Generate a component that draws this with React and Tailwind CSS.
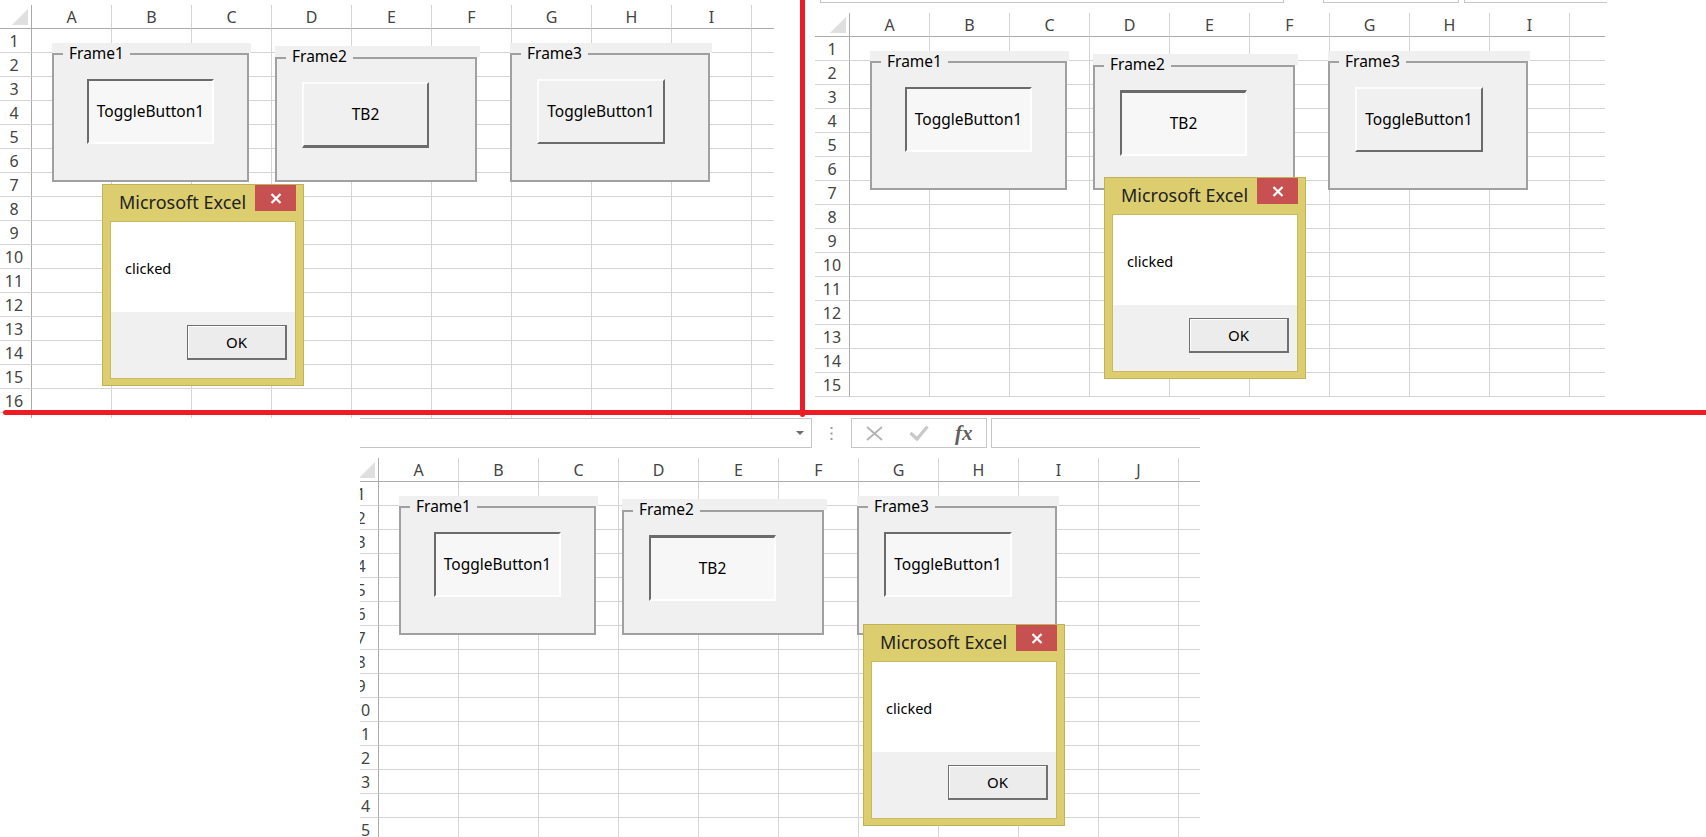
import React from "react";

const COLS = ["A", "B", "C", "D", "E", "F", "G", "H", "I", "J"];

function Corner() {
  return (
    <div className="relative h-[24px] border-r border-b border-[#ababab]">
      <svg className="absolute right-[3px] bottom-[3px]" width="16" height="16" viewBox="0 0 16 16">
        <polygon points="16,0 16,16 0,16" fill="#dfdfdf" />
      </svg>
    </div>
  );
}

function Sheet({ gridClass, ncols, nrows }) {
  const cells = [<Corner key="corner" />];
  for (let c = 0; c < ncols; c++) {
    cells.push(
      <div
        key={"h" + c}
        className="flex h-[24px] items-center justify-center border-r border-b border-r-[#d4d4d4] border-b-[#ababab] text-[16px] leading-none text-[#444]"
      >
        {COLS[c]}
      </div>
    );
  }
  cells.push(<div key="hp" className="h-[24px] border-b border-[#ababab]" />);
  for (let r = 1; r <= nrows; r++) {
    cells.push(
      <div
        key={"r" + r}
        className="flex h-[24px] items-center justify-center border-r border-b border-r-[#ababab] border-b-[#d4d4d4] text-[16px] leading-none text-[#444]"
      >
        {r}
      </div>
    );
    for (let c = 0; c < ncols; c++) {
      cells.push(<div key={r + "-" + c} className="h-[24px] border-r border-b border-[#d4d4d4]" />);
    }
    cells.push(<div key={r + "-p"} className="h-[24px] border-b border-[#d4d4d4]" />);
  }
  return <div className={`grid ${gridClass}`}>{cells}</div>;
}

const FRAME_TYPES = {
  a: { strip: "h-[10px] w-[199px]", box: "h-[129px] w-[197px]", btn: "left-[35px] top-[36px] h-[65px] w-[127px]" },
  b: { strip: "h-[11px] w-[205px]", box: "h-[125px] w-[202px]", btn: "left-[27px] top-[36px] h-[66px] w-[127px]" },
  c: { strip: "h-[10px] w-[202px]", box: "h-[129px] w-[200px]", btn: "left-[27px] top-[36px] h-[65px] w-[128px]" },
};

const BTN_KINDS = {
  sunken:
    "border-2 border-t-[#6b6b6b] border-l-[#6b6b6b] border-r-white border-b-white bg-[#f7f7f7]",
  sunkenThick:
    "border-2 border-t-[3px] border-t-[#6b6b6b] border-l-[#6b6b6b] border-r-white border-b-white bg-[#f7f7f7]",
  raised:
    "border-2 border-t-[#fcfcfc] border-l-[#fcfcfc] border-r-[#6b6b6b] border-b-[#6b6b6b] bg-[#f0f0f0]",
  raisedThick:
    "border-2 border-b-[3px] border-t-[#fcfcfc] border-l-[#fcfcfc] border-r-[#6b6b6b] border-b-[#6b6b6b] bg-[#f0f0f0]",
};

function Frame({ pos, type, caption, label, kind }) {
  const t = FRAME_TYPES[type];
  return (
    <div className={`absolute ${pos} flex flex-col`}>
      <div className={`${t.strip} bg-[#f0f0f0]`} />
      <div className={`${t.box} border-2 border-[#a0a0a0] bg-[#f0f0f0]`} />
      <span className="absolute top-0 left-[11px] bg-[#f0f0f0] px-[6px] text-[15.5px] leading-[20px] text-black">
        {caption}
      </span>
      <div
        className={`absolute ${t.btn} ${BTN_KINDS[kind]} flex items-center justify-center text-[15.5px] leading-none text-black`}
      >
        {label}
      </div>
    </div>
  );
}

function Dialog({ pos }) {
  return (
    <div className={`absolute ${pos} flex h-[202px] w-[202px] flex-col border border-[#c2b257] bg-[#dccd6e]`}>
      <div className="flex h-[36px] items-start justify-between">
        <span className="mt-[5px] ml-[16px] text-[18px] leading-[24px] text-[#222]">Microsoft Excel</span>
        <div className="mr-[7px] flex h-[26px] w-[41px] items-center justify-center bg-[#c75050]">
          <svg width="12" height="11" viewBox="0 0 12 11">
            <path d="M1.5 1 L10.5 10 M10.5 1 L1.5 10" stroke="#ffffff" strokeWidth="2.2" fill="none" />
          </svg>
        </div>
      </div>
      <div className="mx-[7px] flex h-[158px] flex-col border border-[#c8b95c]">
        <div className="h-[90px] bg-white pt-[36px] pl-[14px] text-[14.5px] leading-[20px] text-black">clicked</div>
        <div className="flex flex-1 items-start justify-end bg-[#f0f0f0] pt-[13px] pr-[8px]">
          <div className="flex h-[35px] w-[100px] items-center justify-center border border-r-2 border-b-2 border-[#707070] bg-[#ececec] text-[15px] leading-none text-black shadow-[inset_1px_1px_0_#ffffff]">
            OK
          </div>
        </div>
      </div>
    </div>
  );
}

export default function App() {
  return (
    <div className="relative h-[837px] w-[1706px] overflow-hidden bg-white font-['Noto_Sans',sans-serif] text-black">
      <div className="flex h-[418px]">
        {/* Panel 1 */}
        <div className="relative h-full w-[805px] shrink-0 overflow-hidden pt-[5px]">
          <div className="-ml-[3px]">
            <Sheet gridClass="grid-cols-[35px_repeat(9,80px)_22px]" ncols={9} nrows={17} />
          </div>
          <Frame pos="left-[52px] top-[43px]" type="a" caption="Frame1" label="ToggleButton1" kind="sunken" />
          <Frame pos="left-[275px] top-[46px]" type="b" caption="Frame2" label="TB2" kind="raisedThick" />
          <Frame pos="left-[510px] top-[43px]" type="c" caption="Frame3" label="ToggleButton1" kind="raised" />
          <Dialog pos="left-[102px] top-[184px]" />
        </div>

        {/* Panel 2 */}
        <div className="relative h-full flex-1 overflow-hidden">
          <div className="flex h-[3px]">
            <div className="ml-[15px] w-[464px] border-x border-b border-[#c6c6c6]" />
            <div className="ml-[39px] w-[136px] border-x border-b border-[#c6c6c6]" />
            <div className="ml-[5px] w-[143px] border-l border-b border-[#c6c6c6]" />
          </div>
          <div className="mt-[10px] ml-[10px]">
            <Sheet gridClass="grid-cols-[35px_repeat(9,80px)_35px]" ncols={9} nrows={15} />
          </div>
          <Frame pos="left-[65px] top-[51px]" type="a" caption="Frame1" label="ToggleButton1" kind="sunken" />
          <Frame pos="left-[288px] top-[54px]" type="b" caption="Frame2" label="TB2" kind="sunkenThick" />
          <Frame pos="left-[523px] top-[51px]" type="c" caption="Frame3" label="ToggleButton1" kind="raised" />
          <Dialog pos="left-[299px] top-[177px]" />
        </div>
      </div>

      {/* Panel 3 */}
      <div className="relative ml-[360px] h-[419px] w-[840px] overflow-hidden">
        <div className="flex h-[30px]">
          <div className="flex w-[452px] items-center justify-end border-y border-r border-[#c6c6c6] pr-[7px]">
            <svg width="8" height="4" viewBox="0 0 8 4">
              <polygon points="0,0 8,0 4,4" fill="#6d6d6d" />
            </svg>
          </div>
          <div className="flex w-[39px] items-center justify-center">
            <svg width="3" height="13" viewBox="0 0 3 13">
              <rect x="0.5" y="0" width="2" height="2" fill="#9b9b9b" />
              <rect x="0.5" y="5.5" width="2" height="2" fill="#9b9b9b" />
              <rect x="0.5" y="11" width="2" height="2" fill="#9b9b9b" />
            </svg>
          </div>
          <div className="flex w-[136px] items-center border border-[#c6c6c6]">
            <div className="flex w-[45px] items-center justify-center">
              <svg width="17" height="15" viewBox="0 0 17 15">
                <path d="M1 1 L16 14 M16 1 L1 14" stroke="#b3b3b3" strokeWidth="1.8" fill="none" />
              </svg>
            </div>
            <div className="flex w-[45px] items-center justify-center">
              <svg width="20" height="16" viewBox="0 0 20 16">
                <path d="M1.5 8 L8 14 L18.5 1.5" stroke="#c8c8c8" strokeWidth="3.2" fill="none" />
              </svg>
            </div>
            <div className="flex w-[45px] items-center justify-center font-['Liberation_Serif',serif] text-[21px] leading-none font-bold text-[#5f5f5f] italic">
              fx
            </div>
          </div>
          <div className="ml-[4px] flex-1 border-y border-l border-[#c6c6c6]" />
        </div>
        <div className="mt-[10px] -ml-[16px]">
          <Sheet gridClass="grid-cols-[35px_repeat(10,80px)_22px]" ncols={10} nrows={15} />
        </div>
        <Frame pos="left-[39px] top-[78px]" type="a" caption="Frame1" label="ToggleButton1" kind="sunken" />
        <Frame pos="left-[262px] top-[81px]" type="b" caption="Frame2" label="TB2" kind="sunkenThick" />
        <Frame pos="left-[497px] top-[78px]" type="c" caption="Frame3" label="ToggleButton1" kind="sunken" />
        <Dialog pos="left-[503px] top-[206px]" />
      </div>

      {/* red annotation lines */}
      <div className="absolute top-[410px] right-0 left-[3px] h-[5px] rounded-l-full bg-[#ed1c24]" />
      <div className="absolute top-0 left-[800px] h-[417px] w-[5px] rounded-b-full bg-[#ed1c24]" />
    </div>
  );
}
